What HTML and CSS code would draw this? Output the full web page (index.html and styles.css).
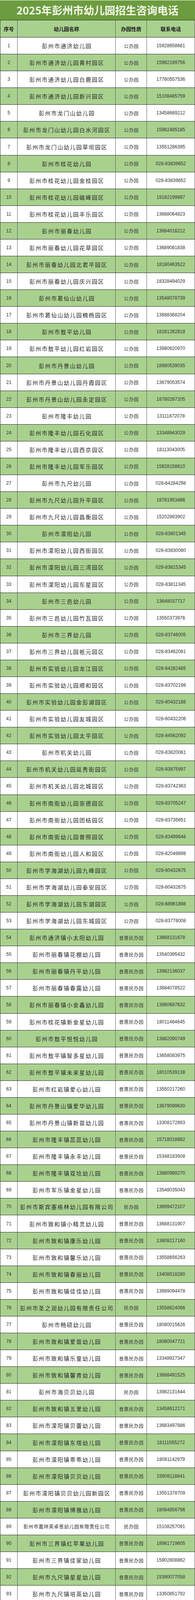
FILE: index.html
```html
<!DOCTYPE html>
<html lang="zh-CN">
<head>
<meta charset="utf-8">
<title>2025年彭州市幼儿园招生咨询电话</title>
<link rel="stylesheet" href="styles.css">
</head>
<body>
<div class="sheet">
  <h1 class="title">2025年彭州市幼儿园招生咨询电话</h1>
  <div class="table">
    <div class="row head"><div class="cell no">序号</div><div class="cell name">幼儿园名称</div><div class="cell type">办园性质</div><div class="cell tel">联系电话</div></div>
    <div class="row"><div class="cell no">1</div><div class="cell name">彭州市通济幼儿园</div><div class="cell type">公办园</div><div class="cell tel">15928658681</div></div>
    <div class="row alt"><div class="cell no">2</div><div class="cell name">彭州市通济幼儿园黄村园区</div><div class="cell type">公办园</div><div class="cell tel">15982189756</div></div>
    <div class="row"><div class="cell no">3</div><div class="cell name">彭州市通济幼儿园白鹿园区</div><div class="cell type">公办园</div><div class="cell tel">17760557536</div></div>
    <div class="row alt"><div class="cell no">4</div><div class="cell name">彭州市通济幼儿园新兴园区</div><div class="cell type">公办园</div><div class="cell tel">15108485759</div></div>
    <div class="row"><div class="cell no">5</div><div class="cell name">彭州市龙门山幼儿园</div><div class="cell type">公办园</div><div class="cell tel">13458689212</div></div>
    <div class="row alt"><div class="cell no">6</div><div class="cell name">彭州市龙门山幼儿园白水河园区</div><div class="cell type">公办园</div><div class="cell tel">15982485185</div></div>
    <div class="row"><div class="cell no">7</div><div class="cell name">彭州市龙门山幼儿园草坝园区</div><div class="cell type">公办园</div><div class="cell tel">13551286395</div></div>
    <div class="row alt"><div class="cell no">8</div><div class="cell name">彭州市桂花幼儿园</div><div class="cell type">公办园</div><div class="cell tel">028-83839652</div></div>
    <div class="row"><div class="cell no">9</div><div class="cell name">彭州市桂花幼儿园金桂园区</div><div class="cell type">公办园</div><div class="cell tel">028-83839652</div></div>
    <div class="row alt"><div class="cell no">10</div><div class="cell name">彭州市桂花幼儿园磁峰园区</div><div class="cell type">公办园</div><div class="cell tel">19182199897</div></div>
    <div class="row"><div class="cell no">11</div><div class="cell name">彭州市桂花幼儿园丰乐园区</div><div class="cell type">公办园</div><div class="cell tel">13688064823</div></div>
    <div class="row alt"><div class="cell no">12</div><div class="cell name">彭州市丽春幼儿园</div><div class="cell type">公办园</div><div class="cell tel">13684016212</div></div>
    <div class="row"><div class="cell no">13</div><div class="cell name">彭州市丽春幼儿园花草园区</div><div class="cell type">公办园</div><div class="cell tel">13689081838</div></div>
    <div class="row alt"><div class="cell no">14</div><div class="cell name">彭州市丽春幼儿园北君平园区</div><div class="cell type">公办园</div><div class="cell tel">18180463522</div></div>
    <div class="row"><div class="cell no">15</div><div class="cell name">彭州市丽春幼儿园庆兴园区</div><div class="cell type">公办园</div><div class="cell tel">18328494029</div></div>
    <div class="row alt"><div class="cell no">16</div><div class="cell name">彭州市葛仙山幼儿园</div><div class="cell type">公办园</div><div class="cell tel">13548078739</div></div>
    <div class="row"><div class="cell no">17</div><div class="cell name">彭州市葛仙山幼儿园楠杨园区</div><div class="cell type">公办园</div><div class="cell tel">13688368204</div></div>
    <div class="row alt"><div class="cell no">18</div><div class="cell name">彭州市敖平幼儿园</div><div class="cell type">公办园</div><div class="cell tel">18161262818</div></div>
    <div class="row"><div class="cell no">19</div><div class="cell name">彭州市敖平幼儿园红岩园区</div><div class="cell type">公办园</div><div class="cell tel">13980620970</div></div>
    <div class="row alt"><div class="cell no">20</div><div class="cell name">彭州市丹景山幼儿园</div><div class="cell type">公办园</div><div class="cell tel">18980539035</div></div>
    <div class="row"><div class="cell no">21</div><div class="cell name">彭州市丹景山幼儿园丹霞园区</div><div class="cell type">公办园</div><div class="cell tel">13679053574</div></div>
    <div class="row alt"><div class="cell no">22</div><div class="cell name">彭州市丹景山幼儿园永定园区</div><div class="cell type">公办园</div><div class="cell tel">18780267205</div></div>
    <div class="row"><div class="cell no">23</div><div class="cell name">彭州市隆丰幼儿园</div><div class="cell type">公办园</div><div class="cell tel">13111872078</div></div>
    <div class="row alt"><div class="cell no">24</div><div class="cell name">彭州市隆丰幼儿园石化园区</div><div class="cell type">公办园</div><div class="cell tel">13348943029</div></div>
    <div class="row"><div class="cell no">25</div><div class="cell name">彭州市隆丰幼儿园西京园区</div><div class="cell type">公办园</div><div class="cell tel">18113043005</div></div>
    <div class="row alt"><div class="cell no">26</div><div class="cell name">彭州市隆丰幼儿园军乐园区</div><div class="cell type">公办园</div><div class="cell tel">15828158610</div></div>
    <div class="row"><div class="cell no">27</div><div class="cell name">彭州市九尺幼儿园</div><div class="cell type">公办园</div><div class="cell tel">028-64284298</div></div>
    <div class="row alt"><div class="cell no">28</div><div class="cell name">彭州市九尺幼儿园升平园区</div><div class="cell type">公办园</div><div class="cell tel">18781953486</div></div>
    <div class="row"><div class="cell no">29</div><div class="cell name">彭州市九尺幼儿园昌衡园区</div><div class="cell type">公办园</div><div class="cell tel">15202893902</div></div>
    <div class="row alt"><div class="cell no">30</div><div class="cell name">彭州市濛阳幼儿园</div><div class="cell type">公办园</div><div class="cell tel">028-83801345</div></div>
    <div class="row"><div class="cell no">31</div><div class="cell name">彭州市濛阳幼儿园西街园区</div><div class="cell type">公办园</div><div class="cell tel">028-83830080</div></div>
    <div class="row alt"><div class="cell no">32</div><div class="cell name">彭州市濛阳幼儿园三湾园区</div><div class="cell type">公办园</div><div class="cell tel">028-83815345</div></div>
    <div class="row"><div class="cell no">33</div><div class="cell name">彭州市濛阳幼儿园东星园区</div><div class="cell type">公办园</div><div class="cell tel">028-83811345</div></div>
    <div class="row alt"><div class="cell no">34</div><div class="cell name">彭州市三邑幼儿园</div><div class="cell type">公办园</div><div class="cell tel">13648037717</div></div>
    <div class="row"><div class="cell no">35</div><div class="cell name">彭州市三邑幼儿园竹瓦园区</div><div class="cell type">公办园</div><div class="cell tel">13550373976</div></div>
    <div class="row alt"><div class="cell no">36</div><div class="cell name">彭州市三界幼儿园</div><div class="cell type">公办园</div><div class="cell tel">028-83746005</div></div>
    <div class="row"><div class="cell no">37</div><div class="cell name">彭州市三界幼儿园祇元园区</div><div class="cell type">公办园</div><div class="cell tel">028-83462081</div></div>
    <div class="row alt"><div class="cell no">38</div><div class="cell name">彭州市实验幼儿园龙江园区</div><div class="cell type">公办园</div><div class="cell tel">028-64282485</div></div>
    <div class="row"><div class="cell no">39</div><div class="cell name">彭州市实验幼儿园顺和园区</div><div class="cell type">公办园</div><div class="cell tel">028-83702198</div></div>
    <div class="row alt"><div class="cell no">40</div><div class="cell name">彭州市实验幼儿园金彭湖园区</div><div class="cell type">公办园</div><div class="cell tel">028-60432188</div></div>
    <div class="row"><div class="cell no">41</div><div class="cell name">彭州市实验幼儿园友城园区</div><div class="cell type">公办园</div><div class="cell tel">028-60432206</div></div>
    <div class="row alt"><div class="cell no">42</div><div class="cell name">彭州市实验幼儿园太平园区</div><div class="cell type">公办园</div><div class="cell tel">028-84562092</div></div>
    <div class="row"><div class="cell no">43</div><div class="cell name">彭州市机关幼儿园</div><div class="cell type">公办园</div><div class="cell tel">028-83820061</div></div>
    <div class="row alt"><div class="cell no">44</div><div class="cell name">彭州市机关幼儿园延秀街园区</div><div class="cell type">公办园</div><div class="cell tel">028-83875997</div></div>
    <div class="row"><div class="cell no">45</div><div class="cell name">彭州市机关幼儿园北城园区</div><div class="cell type">公办园</div><div class="cell tel">028-83742363</div></div>
    <div class="row alt"><div class="cell no">46</div><div class="cell name">彭州市南街幼儿园崇德园区</div><div class="cell type">公办园</div><div class="cell tel">028-83705247</div></div>
    <div class="row"><div class="cell no">47</div><div class="cell name">彭州市南街幼儿园团结园区</div><div class="cell type">公办园</div><div class="cell tel">028-83735651</div></div>
    <div class="row alt"><div class="cell no">48</div><div class="cell name">彭州市南街幼儿园普照园区</div><div class="cell type">公办园</div><div class="cell tel">028-83499648</div></div>
    <div class="row"><div class="cell no">49</div><div class="cell name">彭州市南街幼儿园人和园区</div><div class="cell type">公办园</div><div class="cell tel">028-82049898</div></div>
    <div class="row alt"><div class="cell no">50</div><div class="cell name">彭州市学海湖幼儿园九峰园区</div><div class="cell type">公办园</div><div class="cell tel">028-60432675</div></div>
    <div class="row"><div class="cell no">51</div><div class="cell name">彭州市学海湖幼儿园泰安园区</div><div class="cell type">公办园</div><div class="cell tel">028-60432675</div></div>
    <div class="row alt"><div class="cell no">52</div><div class="cell name">彭州市学海湖幼儿园东湖园区</div><div class="cell type">公办园</div><div class="cell tel">028-68961898</div></div>
    <div class="row"><div class="cell no">53</div><div class="cell name">彭州市学海湖幼儿园东城园区</div><div class="cell type">公办园</div><div class="cell tel">028-83776008</div></div>
    <div class="row alt"><div class="cell no">54</div><div class="cell name">彭州市通济镇小太阳幼儿园</div><div class="cell type">普惠民办园</div><div class="cell tel">13668131678</div></div>
    <div class="row"><div class="cell no">55</div><div class="cell name">彭州市丽春镇花棚幼儿园</div><div class="cell type">普惠民办园</div><div class="cell tel">13540395432</div></div>
    <div class="row alt"><div class="cell no">56</div><div class="cell name">彭州市丽春镇丹平幼儿园</div><div class="cell type">普惠民办园</div><div class="cell tel">13982136037</div></div>
    <div class="row"><div class="cell no">57</div><div class="cell name">彭州市丽春镇春露幼儿园</div><div class="cell type">普惠民办园</div><div class="cell tel">13684078522</div></div>
    <div class="row alt"><div class="cell no">58</div><div class="cell name">彭州市丽春镇小金鑫幼儿园</div><div class="cell type">普惠民办园</div><div class="cell tel">13980687632</div></div>
    <div class="row"><div class="cell no">59</div><div class="cell name">彭州市桂花镇新金星幼儿园</div><div class="cell type">普惠民办园</div><div class="cell tel">18011464645</div></div>
    <div class="row alt"><div class="cell no">60</div><div class="cell name">彭州市敖平悦悦幼儿园</div><div class="cell type">普惠民办园</div><div class="cell tel">13882090749</div></div>
    <div class="row"><div class="cell no">61</div><div class="cell name">彭州市敖平镇智多星幼儿园</div><div class="cell type">普惠民办园</div><div class="cell tel">13658083975</div></div>
    <div class="row alt"><div class="cell no">62</div><div class="cell name">彭州市敖平镇未来星幼儿园</div><div class="cell type">普惠民办园</div><div class="cell tel">18010539138</div></div>
    <div class="row"><div class="cell no">63</div><div class="cell name">彭州市红岩镇爱心幼儿园</div><div class="cell type">普惠民办园</div><div class="cell tel">13550217260</div></div>
    <div class="row alt"><div class="cell no">64</div><div class="cell name">彭州市丹景山镇爱华幼儿园</div><div class="cell type">普惠民办园</div><div class="cell tel">13679099630</div></div>
    <div class="row"><div class="cell no">65</div><div class="cell name">彭州市丹景山镇新苗幼儿园</div><div class="cell type">普惠民办园</div><div class="cell tel">13308172893</div></div>
    <div class="row alt"><div class="cell no">66</div><div class="cell name">彭州市隆丰镇蕊蕊幼儿园</div><div class="cell type">普惠民办园</div><div class="cell tel">15718018882</div></div>
    <div class="row"><div class="cell no">67</div><div class="cell name">彭州市隆丰镇永丰幼儿园</div><div class="cell type">普惠民办园</div><div class="cell tel">15348183508</div></div>
    <div class="row alt"><div class="cell no">68</div><div class="cell name">彭州市隆丰镇双埝幼儿园</div><div class="cell type">普惠民办园</div><div class="cell tel">13880988270</div></div>
    <div class="row"><div class="cell no">69</div><div class="cell name">彭州市军乐镇金星幼儿园</div><div class="cell type">普惠民办园</div><div class="cell tel">13548035043</div></div>
    <div class="row alt"><div class="cell no">70</div><div class="cell name">彭州市斯宾塞格林幼儿园有限公司</div><div class="cell type">民办园</div><div class="cell tel">13699472107</div></div>
    <div class="row"><div class="cell no">71</div><div class="cell name">彭州市致和镇小精灵幼儿园</div><div class="cell type">普惠民办园</div><div class="cell tel">13688131907</div></div>
    <div class="row alt"><div class="cell no">72</div><div class="cell name">彭州市致和镇康乐幼儿园</div><div class="cell type">普惠民办园</div><div class="cell tel">13808217160</div></div>
    <div class="row"><div class="cell no">73</div><div class="cell name">彭州市致和镇馨乐幼儿园</div><div class="cell type">普惠民办园</div><div class="cell tel">13558656263</div></div>
    <div class="row alt"><div class="cell no">74</div><div class="cell name">彭州市致和镇春丽幼儿园</div><div class="cell type">普惠民办园</div><div class="cell tel">13408518280</div></div>
    <div class="row"><div class="cell no">75</div><div class="cell name">彭州市致和镇佳佳幼儿园</div><div class="cell type">普惠民办园</div><div class="cell tel">13689094478</div></div>
    <div class="row alt"><div class="cell no">76</div><div class="cell name">彭州市圣之润幼儿园有限责任公司</div><div class="cell type">民办园</div><div class="cell tel">13558624066</div></div>
    <div class="row"><div class="cell no">77</div><div class="cell name">彭州市畅硕幼儿园</div><div class="cell type">普惠民办园</div><div class="cell tel">18080015626</div></div>
    <div class="row alt"><div class="cell no">78</div><div class="cell name">彭州市致和镇爱苗幼儿园</div><div class="cell type">普惠民办园</div><div class="cell tel">18080047721</div></div>
    <div class="row"><div class="cell no">79</div><div class="cell name">彭州市致和镇乐童幼儿园</div><div class="cell type">普惠民办园</div><div class="cell tel">13348927347</div></div>
    <div class="row alt"><div class="cell no">80</div><div class="cell name">彭州市致和镇馨育幼儿园</div><div class="cell type">普惠民办园</div><div class="cell tel">13688491525</div></div>
    <div class="row"><div class="cell no">81</div><div class="cell name">彭州市海贝贝幼儿园</div><div class="cell type">民办园</div><div class="cell tel">13982131644</div></div>
    <div class="row alt"><div class="cell no">82</div><div class="cell name">彭州市致和镇五里幼儿园</div><div class="cell type">普惠民办园</div><div class="cell tel">13458612171</div></div>
    <div class="row"><div class="cell no">83</div><div class="cell name">彭州市濛阳镇贝蕾幼儿园</div><div class="cell type">普惠民办园</div><div class="cell tel">13683497886</div></div>
    <div class="row alt"><div class="cell no">84</div><div class="cell name">彭州市濛阳镇东塔幼儿园</div><div class="cell type">普惠民办园</div><div class="cell tel">18111555272</div></div>
    <div class="row"><div class="cell no">85</div><div class="cell name">彭州市濛阳镇乖乖幼儿园</div><div class="cell type">普惠民办园</div><div class="cell tel">18081142979</div></div>
    <div class="row alt"><div class="cell no">86</div><div class="cell name">彭州市濛阳镇贝贝幼儿园</div><div class="cell type">普惠民办园</div><div class="cell tel">15908118841</div></div>
    <div class="row"><div class="cell no">87</div><div class="cell name">彭州市濛阳镇贝贝幼儿园新园区</div><div class="cell type">普惠民办园</div><div class="cell tel">13551378709</div></div>
    <div class="row alt"><div class="cell no">88</div><div class="cell name">彭州市濛阳镇博雅幼儿园</div><div class="cell type">普惠民办园</div><div class="cell tel">18084856796</div></div>
    <div class="row"><div class="cell no">89</div><div class="cell name small">彭州市嘉祥英卓恩幼儿园有限责任公司</div><div class="cell type">民办园</div><div class="cell tel">15108257091</div></div>
    <div class="row alt"><div class="cell no">90</div><div class="cell name">彭州市三界镇红苹果幼儿园</div><div class="cell type">普惠民办园</div><div class="cell tel">18981719605</div></div>
    <div class="row"><div class="cell no">91</div><div class="cell name">彭州市三界镇佳家幼儿园</div><div class="cell type">普惠民办园</div><div class="cell tel">15902808862</div></div>
    <div class="row alt"><div class="cell no">92</div><div class="cell name">彭州市九尺镇星星幼儿园</div><div class="cell type">普惠民办园</div><div class="cell tel">15390077058</div></div>
    <div class="row"><div class="cell no">93</div><div class="cell name">彭州市九尺镇培英幼儿园</div><div class="cell type">普惠民办园</div><div class="cell tel">13350851792</div></div>
    <div class="row alt"><div class="cell no">94</div><div class="cell name">彭州市九尺镇金沙幼儿园</div><div class="cell type">普惠民办园</div><div class="cell tel">18980480811</div></div>
    <div class="row"><div class="cell no">95</div><div class="cell name">彭州市升平镇天鑫幼儿园</div><div class="cell type">普惠民办园</div><div class="cell tel">13679055888</div></div>
    <div class="row alt"><div class="cell no">96</div><div class="cell name">彭州市蓓蓓幼儿园</div><div class="cell type">民办园</div><div class="cell tel">13608081159</div></div>
    <div class="row"><div class="cell no">97</div><div class="cell name">彭州市天彭镇乐乐幼儿园</div><div class="cell type">普惠民办园</div><div class="cell tel">18908039715</div></div>
    <div class="row alt"><div class="cell no">98</div><div class="cell name">彭州市天彭镇徽霖幼儿园</div><div class="cell type">普惠民办园</div><div class="cell tel">13198582161</div></div>
    <div class="row"><div class="cell no">99</div><div class="cell name">彭州市天彭镇苗苗幼儿园</div><div class="cell type">民办园</div><div class="cell tel">15390430661</div></div>
    <div class="row alt"><div class="cell no">100</div><div class="cell name">彭州市虹桥新阳光幼儿园</div><div class="cell type">普惠民办园</div><div class="cell tel">17608038637</div></div>
    <div class="row"><div class="cell no">101</div><div class="cell name">彭州市伊顿安安幼儿园</div><div class="cell type">民办园</div><div class="cell tel">15881171727</div></div>
    <div class="row alt"><div class="cell no">102</div><div class="cell name">彭州市天彭镇白马幼儿园</div><div class="cell type">普惠民办园</div><div class="cell tel">15881148036</div></div>
    <div class="row"><div class="cell no">103</div><div class="cell name">彭州市天彭镇红太阳幼儿园</div><div class="cell type">普惠民办园</div><div class="cell tel">15982456420</div></div>
    <div class="row alt"><div class="cell no">104</div><div class="cell name">彭州市天彭镇晨辉幼儿园</div><div class="cell type">普惠民办园</div><div class="cell tel">15388157223</div></div>
    <div class="row"><div class="cell no">105</div><div class="cell name">彭州市益星幼儿园</div><div class="cell type">普惠民办园</div><div class="cell tel">13518141627</div></div>
    <div class="row alt"><div class="cell no">106</div><div class="cell name">彭州市天彭镇白庙幼儿园</div><div class="cell type">普惠民办园</div><div class="cell tel">13540270860</div></div>
    <div class="row"><div class="cell no">107</div><div class="cell name">彭州市馨艺幼儿园</div><div class="cell type">民办园</div><div class="cell tel">13550386422</div></div>
    <div class="row alt"><div class="cell no">108</div><div class="cell name">彭州市蓓蕾佳幼儿园有限公司</div><div class="cell type">民办园</div><div class="cell tel">18702866483</div></div>
    <div class="row"><div class="cell no">109</div><div class="cell name">彭州市天彭镇玲玲幼儿园</div><div class="cell type">民办园</div><div class="cell tel">18113021961</div></div>
    <div class="row alt"><div class="cell no">110</div><div class="cell name">彭州市国锋金贝幼儿园</div><div class="cell type">民办园</div><div class="cell tel">18081912127</div></div>
    <div class="row"><div class="cell no">111</div><div class="cell name small">彭州市加联凤铃草幼儿园有限责任公司</div><div class="cell type">民办园</div><div class="cell tel">18111600858</div></div>
    <div class="row alt"><div class="cell no">112</div><div class="cell name">彭州市天彭镇天天乐幼儿园</div><div class="cell type">民办园</div><div class="cell tel">13666199274</div></div>
    <div class="row"><div class="cell no">113</div><div class="cell name">彭州市天彭镇花盆幼儿园</div><div class="cell type">普惠民办园</div><div class="cell tel">13648065962</div></div>
    <div class="row alt"><div class="cell no">114</div><div class="cell name">彭州市丹洲幼儿园有限公司</div><div class="cell type">民办园</div><div class="cell tel">17882094169</div></div>
    <div class="row"><div class="cell no">115</div><div class="cell name">彭州市天彭镇正菊幼儿园</div><div class="cell type">普惠民办园</div><div class="cell tel">13688428385</div></div>
    <div class="row alt"><div class="cell no">116</div><div class="cell name">彭州市天彭镇东升幼儿园</div><div class="cell type">普惠民办园</div><div class="cell tel">15828222800</div></div>
    <div class="row"><div class="cell no">117</div><div class="cell name">彭州市天彭镇金贝幼儿园</div><div class="cell type">民办园</div><div class="cell tel">18208195506</div></div>
    <div class="row alt"><div class="cell no">118</div><div class="cell name">彭州市优嘉嘉幼儿园</div><div class="cell type">普惠民办园</div><div class="cell tel">13880349811</div></div>
    <div class="row"><div class="cell no">119</div><div class="cell name">彭州市启明雅智幼儿园</div><div class="cell type">民办园</div><div class="cell tel">18202840431</div></div>
    <div class="row alt"><div class="cell no">120</div><div class="cell name">彭州市天彭镇立典幼儿园</div><div class="cell type">民办园</div><div class="cell tel">13541105991</div></div>
    <div class="row"><div class="cell no">121</div><div class="cell name">彭州市天彭镇青青幼儿园</div><div class="cell type">普惠民办园</div><div class="cell tel">15882422468</div></div>
    <div class="row alt"><div class="cell no">122</div><div class="cell name">彭州市优筑普睿思幼儿园有限公司</div><div class="cell type">民办园</div><div class="cell tel">15008414580</div></div>
    <div class="row"><div class="cell no">123</div><div class="cell name">彭州市爱尔贝幼儿园有限责任公司</div><div class="cell type">民办园</div><div class="cell tel">13541134484</div></div>
    <div class="row alt"><div class="cell no">124</div><div class="cell name">彭州市天彭镇明骏幼儿园</div><div class="cell type">普惠民办园</div><div class="cell tel">13541213322</div></div>
    <div class="row"><div class="cell no">125</div><div class="cell name">彭州市阳光起航幼儿园</div><div class="cell type">普惠民办园</div><div class="cell tel">18200500558</div></div>
    <div class="row alt"><div class="cell no">126</div><div class="cell name">彭州市天彭镇琴琴幼儿园</div><div class="cell type">民办园</div><div class="cell tel">13281462805</div></div>
    <div class="row"><div class="cell no">127</div><div class="cell name">彭州市天彭镇启稚幼儿园</div><div class="cell type">普惠民办园</div><div class="cell tel">19983065568</div></div>
    <div class="row alt"><div class="cell no">128</div><div class="cell name">彭州市致和镇亮眼睛幼儿园</div><div class="cell type">普惠民办园</div><div class="cell tel">13518141627</div></div>
  </div>
</div>
</body>
</html>
```

FILE: styles.css
```css
html, body {
  margin: 0;
  padding: 0;
  background: #ffffff;
}

.sheet {
  width: 499px;
  font-family: "Noto Sans CJK SC", "Noto Sans", sans-serif;
  color: #2a2a2a;
}

.title {
  margin: 0;
  height: 51px;
  box-sizing: border-box;
  border-top: 1px solid #ffffff;
  background: #6c9c3f;
  color: #f2f5e6;
  font-family: "Noto Sans CJK SC", sans-serif;
  font-weight: 700;
  font-size: 27px;
  line-height: 50px;
  text-align: center;
}

.table {
  display: flex;
  flex-direction: column;
}

.row {
  display: grid;
  grid-template-columns: 45px 251px 80px 123px;
  height: 43.08px;
  box-sizing: border-box;
  border-bottom: 1px solid #262626;
  background: #ffffff;
}

.row.alt {
  background: #a9d18e;
}

.row.head {
  height: 45px;
  border-top: 1px solid #262626;
  background: #a9d18e;
}

.cell {
  display: flex;
  align-items: center;
  justify-content: center;
  box-sizing: border-box;
  border-right: 1px solid #5c5c5c;
  white-space: nowrap;
}

.cell.no {
  border-left: 1px solid #3a3a3a;
  font-family: "Liberation Sans", Arial, sans-serif;
  font-size: 12px;
  color: #333333;
}

.cell.name {
  font-family: "Noto Sans CJK SC", sans-serif;
  font-size: 14px;
  letter-spacing: 2px;
  padding-left: 2px;
  color: #2a2a2a;
}

.cell.name.small {
  font-size: 12px;
  letter-spacing: 1px;
  padding-left: 1px;
}

.cell.type {
  font-family: "Noto Sans CJK SC", sans-serif;
  font-size: 12px;
  letter-spacing: 0.6px;
  padding-left: 1px;
  color: #3a3a3a;
}

.cell.tel {
  font-family: "Liberation Sans", Arial, sans-serif;
  font-size: 12px;
  color: #333333;
}

.row.head .cell {
  font-family: "Noto Sans CJK SC", sans-serif;
  font-weight: 700;
  font-size: 13px;
  letter-spacing: 0;
  padding-left: 0;
  color: #222222;
}
```
